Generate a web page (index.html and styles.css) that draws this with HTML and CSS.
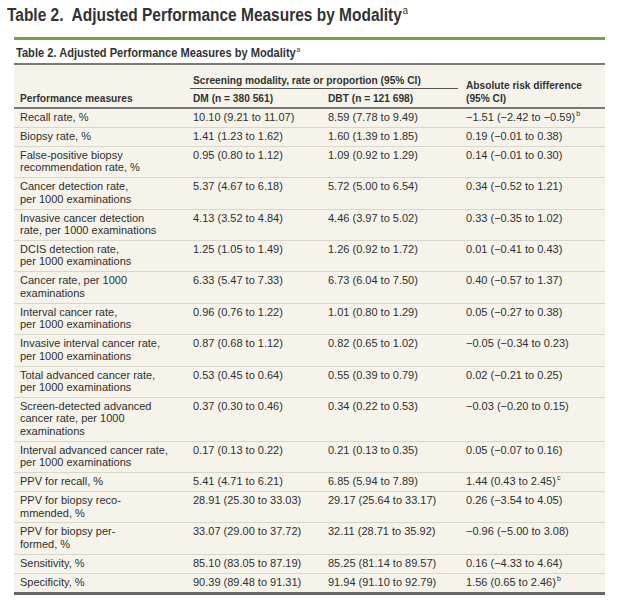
FILE: index.html
```html
<!DOCTYPE html>
<html lang="en">
<head>
<meta charset="utf-8">
<title>Table 2. Adjusted Performance Measures by Modality</title>
<link rel="stylesheet" href="styles.css">
</head>
<body>
<div class="page">
  <h1 class="title">Table 2.&nbsp; Adjusted Performance Measures by Modality<sup class="title-sup">a</sup></h1>
  <div class="table-wrap">
    <div class="caption"><span class="caption-text">Table 2. Adjusted Performance Measures by Modality<sup class="cap-sup">a</sup></span></div>
    <table class="data">
      <colgroup>
        <col class="c1"><col class="c2"><col class="c3"><col class="c4">
      </colgroup>
      <thead>
        <tr>
          <th rowspan="2" class="h-bottom"><span class="hl">Performance measures</span></th>
          <th colspan="2" class="h-group"><div class="group-label"><span class="hl">Screening modality, rate or proportion (95% CI)</span></div></th>
          <th rowspan="2" class="h-bottom"><span class="hl">Absolute risk difference<br>(95% CI)</span></th>
        </tr>
        <tr>
          <th class="h-sub"><span class="hl">DM (n = 380 561)</span></th>
          <th class="h-sub"><span class="hl">DBT (n = 121 698)</span></th>
        </tr>
      </thead>
      <tbody>
        <tr><td>Recall rate, %</td><td>10.10 (9.21 to 11.07)</td><td>8.59 (7.78 to 9.49)</td><td>−1.51 (−2.42 to −0.59)<sup>b</sup></td></tr>
        <tr><td>Biopsy rate, %</td><td>1.41 (1.23 to 1.62)</td><td>1.60 (1.39 to 1.85)</td><td>0.19 (−0.01 to 0.38)</td></tr>
        <tr><td>False-positive biopsy<br>recommendation rate, %</td><td>0.95 (0.80 to 1.12)</td><td>1.09 (0.92 to 1.29)</td><td>0.14 (−0.01 to 0.30)</td></tr>
        <tr><td>Cancer detection rate,<br>per 1000 examinations</td><td>5.37 (4.67 to 6.18)</td><td>5.72 (5.00 to 6.54)</td><td>0.34 (−0.52 to 1.21)</td></tr>
        <tr><td>Invasive cancer detection<br>rate, per 1000 examinations</td><td>4.13 (3.52 to 4.84)</td><td>4.46 (3.97 to 5.02)</td><td>0.33 (−0.35 to 1.02)</td></tr>
        <tr><td>DCIS detection rate,<br>per 1000 examinations</td><td>1.25 (1.05 to 1.49)</td><td>1.26 (0.92 to 1.72)</td><td>0.01 (−0.41 to 0.43)</td></tr>
        <tr><td>Cancer rate, per 1000<br>examinations</td><td>6.33 (5.47 to 7.33)</td><td>6.73 (6.04 to 7.50)</td><td>0.40 (−0.57 to 1.37)</td></tr>
        <tr><td>Interval cancer rate,<br>per 1000 examinations</td><td>0.96 (0.76 to 1.22)</td><td>1.01 (0.80 to 1.29)</td><td>0.05 (−0.27 to 0.38)</td></tr>
        <tr><td>Invasive interval cancer rate,<br>per 1000 examinations</td><td>0.87 (0.68 to 1.12)</td><td>0.82 (0.65 to 1.02)</td><td>−0.05 (−0.34 to 0.23)</td></tr>
        <tr><td>Total advanced cancer rate,<br>per 1000 examinations</td><td>0.53 (0.45 to 0.64)</td><td>0.55 (0.39 to 0.79)</td><td>0.02 (−0.21 to 0.25)</td></tr>
        <tr><td>Screen-detected advanced<br>cancer rate, per 1000<br>examinations</td><td>0.37 (0.30 to 0.46)</td><td>0.34 (0.22 to 0.53)</td><td>−0.03 (−0.20 to 0.15)</td></tr>
        <tr><td>Interval advanced cancer rate,<br>per 1000 examinations</td><td>0.17 (0.13 to 0.22)</td><td>0.21 (0.13 to 0.35)</td><td>0.05 (−0.07 to 0.16)</td></tr>
        <tr><td>PPV for recall, %</td><td>5.41 (4.71 to 6.21)</td><td>6.85 (5.94 to 7.89)</td><td>1.44 (0.43 to 2.45)<sup>c</sup></td></tr>
        <tr><td>PPV for biopsy reco-<br>mmended, %</td><td>28.91 (25.30 to 33.03)</td><td>29.17 (25.64 to 33.17)</td><td>0.26 (−3.54 to 4.05)</td></tr>
        <tr><td>PPV for biopsy per-<br>formed, %</td><td>33.07 (29.00 to 37.72)</td><td>32.11 (28.71 to 35.92)</td><td>−0.96 (−5.00 to 3.08)</td></tr>
        <tr><td>Sensitivity, %</td><td>85.10 (83.05 to 87.19)</td><td>85.25 (81.14 to 89.57)</td><td>0.16 (−4.33 to 4.64)</td></tr>
        <tr><td>Specificity, %</td><td>90.39 (89.48 to 91.31)</td><td>91.94 (91.10 to 92.79)</td><td>1.56 (0.65 to 2.46)<sup>b</sup></td></tr>
      </tbody>
    </table>
  </div>
</div>
</body>
</html>
```

FILE: styles.css
```css
html, body {
  margin: 0;
  padding: 0;
  background: #ffffff;
}

body {
  color: #303030;
  font-family: "Liberation Sans", Arial, sans-serif;
}

.page {
  width: 619px;
  padding-top: 4px;
}

.title {
  margin: 0 0 11px 7px;
  font-family: "Liberation Sans", Arial, sans-serif;
  font-weight: 700;
  font-size: 18px;
  line-height: 22px;
  color: #333333;
  white-space: nowrap;
  transform: scaleX(0.86);
  transform-origin: left center;
}

.title-sup {
  font-weight: 400;
  font-size: 11px;
  line-height: 0;
  vertical-align: 7px;
  margin-left: 1px;
}

.table-wrap {
  margin-left: 14px;
  width: 591px;
  border-top: 3px solid #6fa64b;
}

.caption {
  padding: 5px 0 2px 2px;
  font-weight: 700;
  font-size: 13px;
  line-height: 16px;
  color: #333333;
  border-bottom: 2px solid #7a7a7a;
  white-space: nowrap;
}

.caption-text {
  display: inline-block;
  transform: scaleX(0.853);
  transform-origin: left center;
}

.cap-sup {
  font-weight: 400;
  font-size: 8px;
  line-height: 0;
  vertical-align: 5px;
  margin-left: 1px;
}

.data {
  width: 591px;
  table-layout: fixed;
  border-collapse: separate;
  border-spacing: 0;
  background: #f5f3ea;
  border-bottom: 3px solid #686868;
}

.c1 { width: 173px; }
.c2 { width: 135px; }
.c3 { width: 138px; }
.c4 { width: 145px; }

.data th {
  text-align: left;
  font-weight: 700;
  font-size: 11.2px;
  line-height: 12.5px;
  color: #333333;
  padding: 3px 6px 3px 6px;
  white-space: nowrap;
}

.hl {
  display: inline-block;
  transform: scaleX(0.91);
  transform-origin: left center;
}

.data th.h-bottom {
  vertical-align: bottom;
  border-bottom: 2px solid #777777;
}

.data th.h-group {
  padding: 9px 2px 0 3px;
  vertical-align: bottom;
}

.group-label {
  padding: 0 0 1px 3px;
  border-bottom: 1px solid #555555;
}

.data th.h-sub {
  border-bottom: 2px solid #777777;
}

.data td {
  font-size: 11px;
  line-height: 12.5px;
  padding: 2px 6px 3.4px 6px;
  vertical-align: top;
  white-space: nowrap;
  border-bottom: 1px solid #d9d6cb;
}

.data tbody tr:last-child td {
  border-bottom: none;
}

.data sup {
  font-size: 7px;
  line-height: 0;
  vertical-align: 5px;
  margin-left: 1px;
}
```
